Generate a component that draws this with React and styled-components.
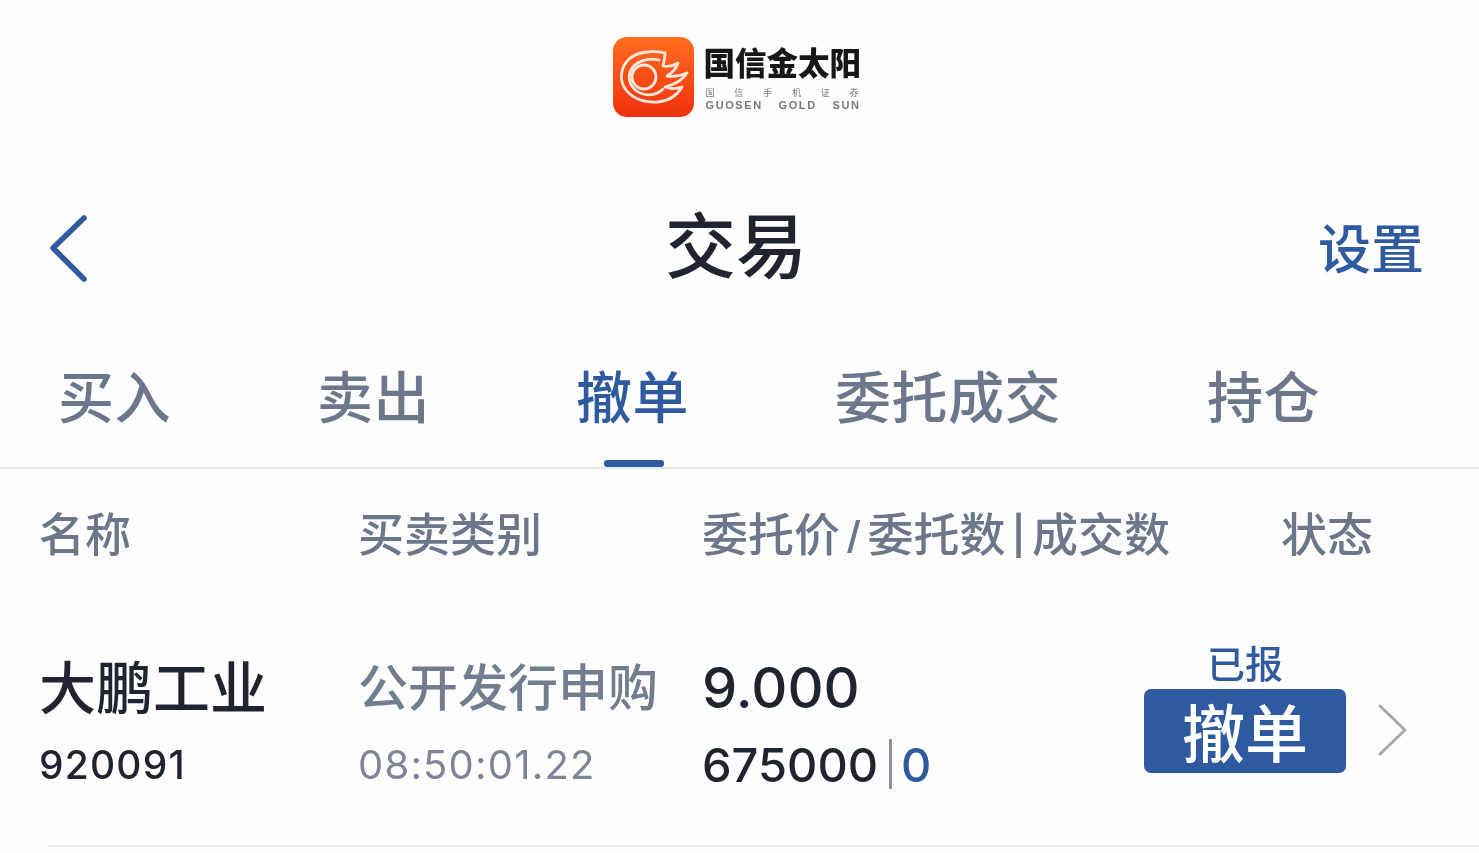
import styled, { createGlobalStyle } from "styled-components"

const cjk = `"Noto Sans CJK SC", "Noto Sans", sans-serif`
const latin = `Inter, "Noto Sans CJK SC", sans-serif`
const blue = "#2f5a9f"
const grey = "#6d778b"
const ink = "#1f2430"

const GlobalStyle = createGlobalStyle`
    html, body {
        margin: 0;
        background: #fdfdfe;
    }
    * {
        box-sizing: border-box;
    }
`

const Page = styled.div`
    width: 1479px;
    height: 853px;
    overflow: hidden;
    background: #fdfdfe;
    font-family: ${cjk};
    filter: blur(0.7px);
`

const LogoBar = styled.div`
    height: 150px;
    padding: 37px 6px 0 0;
    display: flex;
    justify-content: center;
    gap: 10px;
`

const LogoIcon = styled.svg`
    width: 81px;
    height: 80px;
`

const Wordmark = styled.div`
    width: 157px;
    display: flex;
    flex-direction: column;
    color: #17171a;
`

const BrandName = styled.div`
    font-size: 31.5px;
    line-height: 50px;
    margin-top: -1px;
    font-weight: 900;
    white-space: nowrap;
`

const BrandSub = styled.div`
    display: flex;
    justify-content: space-between;
    margin-top: 1px;
    padding: 0 2px;
    font-size: 9px;
    line-height: 12px;
    color: #77797d;
`

const BrandLatin = styled.div`
    display: flex;
    justify-content: space-between;
    padding: 0 0 0 2px;
    font-family: "Liberation Sans", sans-serif;
    font-size: 11px;
    line-height: 12px;
    font-weight: 700;
    letter-spacing: 1.6px;
    color: #77797d;
`

const NavBar = styled.div`
    height: 196px;
    padding: 0 55px 0 50px;
    display: flex;
    align-items: center;
    justify-content: space-between;
`

const NavTitle = styled.div`
    font-size: 71px;
    line-height: 80px;
    font-weight: 500;
    color: ${ink};
    margin: 0 0 14px 64px;
`

const NavAction = styled.div`
    font-size: 53px;
    line-height: 60px;
    font-weight: 500;
    color: ${blue};
    margin-bottom: 4px;
`

const TabBar = styled.div`
    height: 123px;
    padding: 13px 0 0 58px;
    display: flex;
    gap: 146px;
    border-bottom: 2px solid #e4e7ec;
`

const Tab = styled.div`
    position: relative;
    height: 108px;
    font-size: 56px;
    line-height: 70px;
    letter-spacing: 0.5px;
    font-weight: 500;
    color: ${props => (props.$active ? blue : grey)};

    &::after {
        content: "";
        display: ${props => (props.$active ? "block" : "none")};
        position: absolute;
        left: 28px;
        bottom: 0;
        width: 60px;
        height: 7px;
        border-radius: 3px;
        background: ${blue};
    }
`

const Columns = styled.div`
    display: grid;
    grid-template-columns: 319px 344px 442px 1fr;
    padding-left: 39px;
`

const HeadRow = styled(Columns)`
    grid-template-columns: 319px 344px 579px 1fr;
    height: 131px;
    padding-top: 33px;
    font-size: 46px;
    line-height: 58px;
    font-weight: 500;
    color: ${grey};
`

const HeadPrice = styled.div`
    display: flex;
    width: 468px;
    justify-content: space-between;
    white-space: nowrap;
`

const HeadSep = styled.span`
    padding-top: 4px;
    font-family: ${latin};
    font-size: 38px;
    font-weight: 600;
`

const StockRow = styled(Columns)`
    height: 246px;
    margin-top: -2px;
    padding-top: 48px;
    position: relative;

    &::after {
        content: "";
        position: absolute;
        left: 48px;
        right: 0;
        top: 247px;
        height: 2px;
        background: #eceef2;
    }
`

const Cell = styled.div`
    display: flex;
    flex-direction: column;
`

const StockName = styled.div`
    font-size: 57px;
    line-height: 76px;
    font-weight: 500;
    color: ${ink};
    white-space: nowrap;
`

const StockCode = styled.div`
    font-family: ${latin};
    font-size: 39px;
    line-height: 86px;
    font-weight: 500;
    letter-spacing: 1.2px;
    color: ${ink};
`

const TradeType = styled.div`
    font-size: 50px;
    line-height: 76px;
    font-weight: 500;
    color: #737d90;
    white-space: nowrap;
`

const TradeTime = styled.div`
    font-family: ${latin};
    font-size: 40px;
    line-height: 86px;
    letter-spacing: 1.2px;
    color: #7d8698;
`

const Price = styled.div`
    font-family: ${latin};
    font-size: 56px;
    line-height: 84px;
    font-weight: 500;
    color: ${ink};
`

const Volume = styled.div`
    display: flex;
    align-items: center;
    height: 68px;
    font-family: ${latin};
    font-size: 47px;
    font-weight: 500;
    color: ${ink};
`

const Divider = styled.span`
    width: 3px;
    height: 50px;
    margin: 0 9px 0 11px;
    background: #8a93a3;
`

const Filled = styled.span`
    color: ${blue};
`

const StatusCell = styled.div`
    display: grid;
    grid-template-columns: 202px auto;
    column-gap: 32px;
`

const StatusStack = styled.div`
    display: flex;
    flex-direction: column;
    align-items: center;
`

const StatusText = styled.div`
    font-size: 38px;
    line-height: 46px;
    font-weight: 500;
    color: ${blue};
    margin: -7px 0 4px;
`

const CancelButton = styled.button`
    width: 202px;
    height: 84px;
    border: 0;
    padding: 0 0 3px;
    border-radius: 7px;
    background: ${blue};
    color: #fff;
    font-family: ${cjk};
    font-size: 63px;
    line-height: 81px;
    font-weight: 500;
`

const Chevron = styled.svg`
    width: 30px;
    height: 54px;
    margin-top: 57px;
`

const Logo = () => (
    <LogoIcon viewBox="0 0 81 80">
        <defs>
            <linearGradient id="logoFill" x1="0" y1="0" x2="0" y2="1">
                <stop offset="0" stopColor="#ff6d1f" />
                <stop offset="1" stopColor="#f1300f" />
            </linearGradient>
        </defs>
        <rect width="81" height="80" rx="14" fill="url(#logoFill)" />
        <g fill="none" stroke="#ffe6da" strokeWidth="2.8" strokeLinejoin="round" strokeLinecap="round">
            <circle cx="31" cy="40" r="12" />
            <path d="M52 16 C38 13 24 15 16 22 C7 31 6 44 13 53 C21 63 34 66 45 65 C55 64 63 60 69 50 C63 52 57 52 52 50 C60 48 69 44 74 36 C67 39 60 40 54 39 C59 36 63 32 65 26 C60 29 55 30 50 29 C51 25 52 21 52 16" />
            <path d="M46 23 C34 20 21 25 17 35 C14 45 20 54 30 57 C38 59 45 57 50 52" />
        </g>
    </LogoIcon>
)

export default function App() {
    return (
        <Page>
            <GlobalStyle />
            <LogoBar>
                <Logo />
                <Wordmark>
                    <BrandName>国信金太阳</BrandName>
                    <BrandSub>
                        {"国信手机证券".split("").map(c => <span key={c}>{c}</span>)}
                    </BrandSub>
                    <BrandLatin>
                        <span>GUOSEN</span>
                        <span>GOLD</span>
                        <span>SUN</span>
                    </BrandLatin>
                </Wordmark>
            </LogoBar>

            <NavBar>
                <svg width="40" height="70" viewBox="0 0 40 70">
                    <path d="M34 5 L3 35 L34 66" fill="none" stroke={blue} strokeWidth="5.5" strokeLinecap="round" strokeLinejoin="round" />
                </svg>
                <NavTitle>交易</NavTitle>
                <NavAction>设置</NavAction>
            </NavBar>

            <TabBar>
                <Tab>买入</Tab>
                <Tab>卖出</Tab>
                <Tab $active>撤单</Tab>
                <Tab>委托成交</Tab>
                <Tab>持仓</Tab>
            </TabBar>

            <HeadRow>
                <div>名称</div>
                <div>买卖类别</div>
                <HeadPrice>
                    <span>委托价</span>
                    <HeadSep>/</HeadSep>
                    <span>委托数</span>
                    <HeadSep>|</HeadSep>
                    <span>成交数</span>
                </HeadPrice>
                <div>状态</div>
            </HeadRow>

            <StockRow>
                <Cell>
                    <StockName>大鹏工业</StockName>
                    <StockCode>920091</StockCode>
                </Cell>
                <Cell>
                    <TradeType>公开发行申购</TradeType>
                    <TradeTime>08:50:01.22</TradeTime>
                </Cell>
                <Cell>
                    <Price>9.000</Price>
                    <Volume>
                        675000<Divider /><Filled>0</Filled>
                    </Volume>
                </Cell>
                <StatusCell>
                    <StatusStack>
                        <StatusText>已报</StatusText>
                        <CancelButton>撤单</CancelButton>
                    </StatusStack>
                    <Chevron viewBox="0 0 30 54">
                        <path d="M2 3 L27 27 L2 51" fill="none" stroke="#a4a8b0" strokeWidth="3" strokeLinecap="round" strokeLinejoin="round" />
                    </Chevron>
                </StatusCell>
            </StockRow>
        </Page>
    )
}
